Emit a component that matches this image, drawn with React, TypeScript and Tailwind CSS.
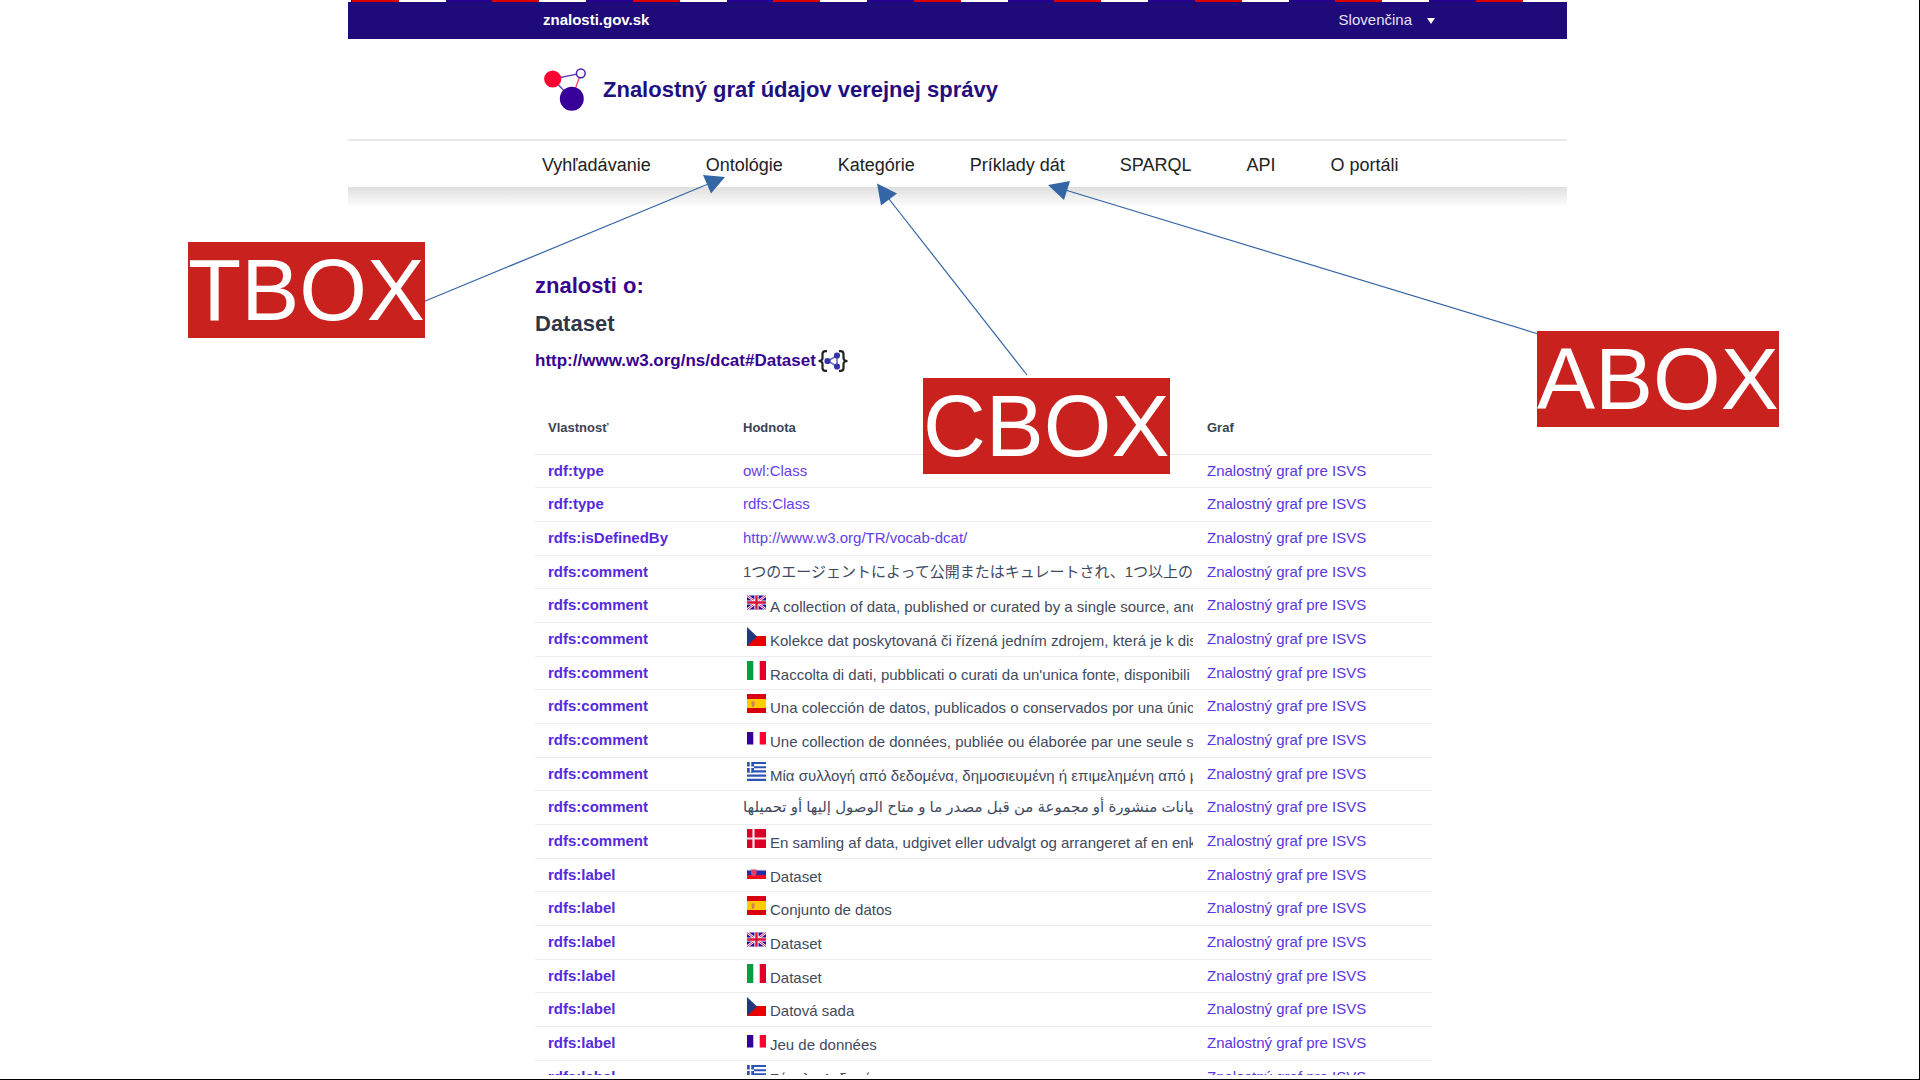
import React from "react";

type Lang = "gb" | "cz" | "it" | "es" | "fr" | "gr" | "dk" | "sk";
type Row = { prop: string; value: string; link?: boolean; lang?: Lang; rtl?: boolean };

const navItems = ["Vyhľadávanie", "Ontológie", "Kategórie", "Príklady dát", "SPARQL", "API", "O portáli"];

const rows: Row[] = [
  { prop: "rdf:type", value: "owl:Class", link: true },
  { prop: "rdf:type", value: "rdfs:Class", link: true },
  { prop: "rdfs:isDefinedBy", value: "http://www.w3.org/TR/vocab-dcat/", link: true },
  { prop: "rdfs:comment", value: "1つのエージェントによって公開またはキュレートされ、1つ以上の" },
  { prop: "rdfs:comment", value: "A collection of data, published or curated by a single source, and", lang: "gb" },
  { prop: "rdfs:comment", value: "Kolekce dat poskytovaná či řízená jedním zdrojem, která je k dis", lang: "cz" },
  { prop: "rdfs:comment", value: "Raccolta di dati, pubblicati o curati da un'unica fonte, disponibili", lang: "it" },
  { prop: "rdfs:comment", value: "Una colección de datos, publicados o conservados por una únic", lang: "es" },
  { prop: "rdfs:comment", value: "Une collection de données, publiée ou élaborée par une seule s", lang: "fr" },
  { prop: "rdfs:comment", value: "Μία συλλογή από δεδομένα, δημοσιευμένη ή επιμελημένη από μ", lang: "gr" },
  { prop: "rdfs:comment", value: "بيانات منشورة أو مجموعة من قبل مصدر ما و متاح الوصول إليها أو تحميلها", rtl: true },
  { prop: "rdfs:comment", value: "En samling af data, udgivet eller udvalgt og arrangeret af en enk", lang: "dk" },
  { prop: "rdfs:label", value: "Dataset", lang: "sk" },
  { prop: "rdfs:label", value: "Conjunto de datos", lang: "es" },
  { prop: "rdfs:label", value: "Dataset", lang: "gb" },
  { prop: "rdfs:label", value: "Dataset", lang: "it" },
  { prop: "rdfs:label", value: "Datová sada", lang: "cz" },
  { prop: "rdfs:label", value: "Jeu de données", lang: "fr" },
  { prop: "rdfs:label", value: "Σύνολο Δεδομένων", lang: "gr" },
];

function Flag({ lang }: { lang: Lang }) {
  return (
    <svg viewBox="0 0 19 19" className="mt-1 ml-1 size-[19px] shrink-0" aria-hidden="true">
      {lang === "gb" && (
        <g>
          <rect y="2.500" width="19" height="14" fill="#2a0a94" />
          <path d="M0 2.500L19 16.500M19 2.500L0 16.500" stroke="#fff" strokeWidth="2.400" />
          <path d="M0 2.500L19 16.500M19 2.500L0 16.500" stroke="#e0103a" strokeWidth="0.900" />
          <path d="M9.500 2.500V16.500M0 9.500H19" stroke="#fff" strokeWidth="4.200" />
          <path d="M9.500 2.500V16.500M0 9.500H19" stroke="#e0103a" strokeWidth="2.400" />
        </g>
      )}
      {lang === "cz" && (
        <g>
          <rect y="9" width="19" height="10" fill="#e60000" />
          <path d="M0 0L10 9.500L0 19Z" fill="#20387f" />
        </g>
      )}
      {lang === "it" && (
        <g>
          <rect width="6.300" height="19" fill="#00a040" />
          <rect x="12.700" width="6.300" height="19" fill="#e0002f" />
        </g>
      )}
      {lang === "es" && (
        <g>
          <rect width="19" height="19" fill="#d8000f" />
          <rect y="5" width="19" height="9" fill="#ffcc00" />
          <path d="M4 8L6 6.500L8 8V11L6 13L4.500 11Z" fill="#e0954a" />
          <path d="M6 8.500V13" stroke="#c8705a" strokeWidth="1.200" />
        </g>
      )}
      {lang === "fr" && (
        <g>
          <rect y="4" width="6.300" height="12.500" fill="#330099" />
          <rect x="12.700" y="4" width="6.300" height="12.500" fill="#ff0033" />
        </g>
      )}
      {lang === "gr" && (
        <g>
          <path d="M0 1H19M0 5.200H19M0 9.400H19M0 13.600H19M0 17.900H19" stroke="#2b55b5" strokeWidth="2.100" />
          <rect width="7" height="10.400" fill="#2b55b5" />
          <path d="M3.500 0V10.400M0 5.200H7" stroke="#fff" strokeWidth="1.500" />
        </g>
      )}
      {lang === "dk" && (
        <g>
          <rect width="19" height="19" fill="#d80027" />
          <path d="M6.500 0V19M0 9.500H19" stroke="#fbe4ea" strokeWidth="2.200" />
        </g>
      )}
      {lang === "sk" && (
        <g>
          <rect y="6.500" width="19" height="2" fill="#e6e6f4" />
          <rect y="7.500" width="19" height="4.500" fill="#2b2ba6" />
          <rect y="12" width="19" height="4" fill="#f50a1e" />
          <path d="M4 6.500H9.500V10.500Q9 13 6.800 13.500Q4.500 13 4 10.500Z" fill="#e0406a" />
        </g>
      )}
    </svg>
  );
}

function Logo() {
  return (
    <svg viewBox="0 0 44 44" className="size-[44px] shrink-0" aria-hidden="true">
      <path d="M9.700 12L37.800 6.300" stroke="#5a3bb0" strokeWidth="1.300" />
      <path d="M9.700 12L28.800 31.700" stroke="#5a3bb0" strokeWidth="1.300" />
      <path d="M37.800 6.300L28.800 31.700" stroke="#ff4060" strokeWidth="1.300" />
      <circle cx="9.700" cy="12" r="8.600" fill="#ff0033" />
      <circle cx="37.800" cy="6.300" r="4.400" fill="#fff" stroke="#4a1fa8" strokeWidth="1.500" />
      <circle cx="28.800" cy="31.700" r="12" fill="#370099" />
    </svg>
  );
}

function JsonLdIcon() {
  return (
    <svg viewBox="0 0 30 22" className="h-[22px] w-[30px]" fill="none" aria-hidden="true">
      <path d="M9 1.200H7.500Q4.500 1.200 4.500 4V8Q4.500 11 0.500 11Q4.500 11 4.500 14V18Q4.500 20.800 7.500 20.800H9" stroke="#222" strokeWidth="2.200" />
      <path d="M21 1.200H22.500Q25.500 1.200 25.500 4V8Q25.500 11 29.500 11Q25.500 11 25.500 14V18Q25.500 20.800 22.500 20.800H21" stroke="#222" strokeWidth="2.200" />
      <path d="M19 5.500L10 11L19 16.500Z" stroke="#6d6fc4" strokeWidth="1.600" />
      <circle cx="19" cy="5.500" r="3.100" fill="#3333aa" />
      <circle cx="9.500" cy="11" r="3.100" fill="#3333aa" />
      <circle cx="19" cy="16.500" r="3.100" fill="#3333aa" />
    </svg>
  );
}

function Annotations() {
  return (
    <>
      <svg className="pointer-events-none absolute top-0 left-0 h-[400px] w-[1600px]" viewBox="0 0 1600 400" aria-hidden="true">
        <g stroke="#3465a4" strokeWidth="1.200">
          <path d="M424 301.500L707 184.500" />
          <path d="M1027 375L889 199" />
          <path d="M1540 334.500L1067 190.500" />
        </g>
        <g fill="#3465a4">
          <path d="M725 177L703 175L711 193.500Z" />
          <path d="M877 183.500L897 193.500L881 205.500Z" />
          <path d="M1048 185L1070 181L1064 200Z" />
        </g>
      </svg>
      <div className="absolute top-[242px] left-[188px] bg-[#c9211e] text-[87px] leading-[96px] text-white">TBOX</div>
      <div className="absolute top-[378px] left-[923px] bg-[#c9211e] text-[87px] leading-[96px] text-white">CBOX</div>
      <div className="absolute top-[331px] left-[1537px] bg-[#c9211e] text-[87px] leading-[96px] text-white">ABOX</div>
    </>
  );
}

export default function App() {
  return (
    <div className="relative flex h-screen flex-col overflow-hidden border-r border-b border-black bg-white pb-1 font-['Liberation_Sans','Noto_Sans_CJK_JP','DejaVu_Sans',sans-serif]">
      <div className="mr-[352px] ml-[348px] flex min-h-0 flex-1 flex-col overflow-hidden">
        <div className="h-0.5 shrink-0 bg-[repeating-linear-gradient(90deg,#dc0000_0_47px,#fff_47px_94px,#26008c_94px_140px,#dc0000_140px_187px,#fff_187px_234px,#26008c_234px_281px)] bg-[position:4px_0]" />
        <div className="flex h-[37px] shrink-0 items-center justify-between bg-[#1e0a78] pr-[132px] pl-[195px] text-[15px] text-white">
          <a href="#" className="font-bold">znalosti.gov.sk</a>
          <button type="button" className="flex items-center gap-[15px] text-[#e6e2f5]">
            Slovenčina
            <svg viewBox="0 0 8 6" className="h-1.5 w-2" fill="#fff" aria-hidden="true">
              <path d="M0 0H8L4 6Z" />
            </svg>
          </button>
        </div>
        <header className="flex h-[100px] shrink-0 items-center gap-4 pl-[195px]">
          <Logo />
          <h1 className="text-[22px] font-bold text-[#210f80]">Znalostný graf údajov verejnej správy</h1>
        </header>
        <nav className="flex h-12 shrink-0 items-center gap-[55px] border-t-2 border-[#e9e9e9] pt-0.5 pl-[194px] text-lg whitespace-nowrap text-[#222]">
          {navItems.map((n) => (
            <a key={n} href="#">{n}</a>
          ))}
        </nav>
        <div className="h-5 shrink-0 bg-linear-to-b from-[#dfdfdf] to-white" />
        <main className="min-h-0 flex-1 overflow-hidden pt-[60px] pr-[135px] pl-[187px]">
          <h2 className="text-[22px] leading-[38px] font-bold text-[#37048f]">znalosti o:</h2>
          <h3 className="text-[22px] leading-[38px] font-bold text-[#2d3748]">Dataset</h3>
          <div className="flex h-9 items-center gap-0.5 text-[17px] font-bold text-[#37048f]">
            <a href="#">http://www.w3.org/ns/dcat#Dataset</a>
            <button type="button" aria-label="JSON-LD"><JsonLdIcon /></button>
          </div>
          <table className="mt-6 w-full table-fixed border-collapse text-left text-[15px] text-[#414a5e]">
            <colgroup>
              <col className="w-[194px]" />
              <col />
              <col className="w-[239px]" />
            </colgroup>
            <thead>
              <tr className="h-[51px] border-b border-[#e6e7ee] text-[13px] text-[#3a4356]">
                <th scope="col" className="pb-0.5 pl-[13px]">Vlastnosť</th>
                <th scope="col" className="pb-0.5 pl-3.5">Hodnota</th>
                <th scope="col" className="pb-0.5 pl-3.5">Graf</th>
              </tr>
            </thead>
            <tbody>
              {rows.map((r, i) => (
                <tr key={i} className="h-[34px] border-b border-[#ececef] nth-[3n+1]:h-[33px]">
                  <th scope="row" className="p-0 pl-[13px] font-bold">
                    <a href="#" className="block leading-8 text-[#5529de]">{r.prop}</a>
                  </th>
                  <td className="p-0 pl-3.5">
                    {r.lang ? (
                      <div className="flex h-8 gap-1 overflow-hidden whitespace-nowrap">
                        <Flag lang={r.lang} />
                        <span className="pt-1 leading-7">{r.value}</span>
                      </div>
                    ) : r.link ? (
                      <a href="#" className="block leading-8 text-[#6340e6]">{r.value}</a>
                    ) : (
                      <div className="flex h-8 overflow-hidden leading-8 whitespace-nowrap">
                        <span dir={r.rtl ? "rtl" : "ltr"}>{r.value}</span>
                      </div>
                    )}
                  </td>
                  <td className="p-0 pl-3.5">
                    <a href="#" className="block leading-8 text-[#5a35e2]">Znalostný graf pre ISVS</a>
                  </td>
                </tr>
              ))}
            </tbody>
          </table>
        </main>
      </div>
      <Annotations />
    </div>
  );
}
